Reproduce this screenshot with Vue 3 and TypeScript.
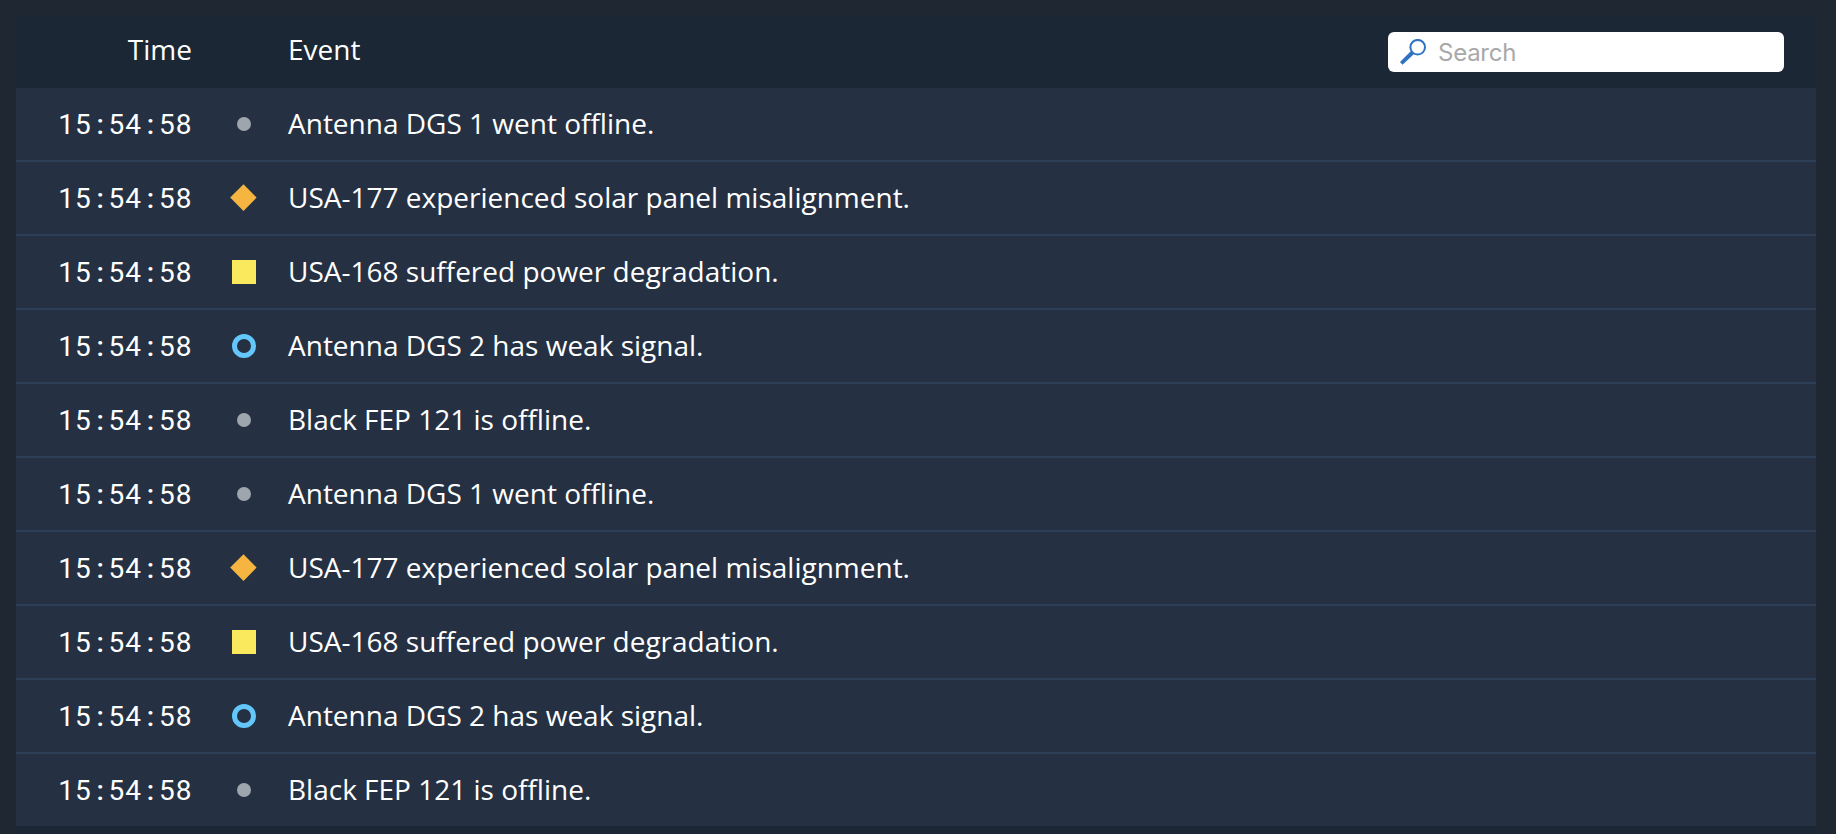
<script setup lang="ts">
import { ref, computed } from 'vue'

type Status = 'off' | 'serious' | 'caution' | 'standby'

interface LogEvent {
  time: string
  status: Status
  message: string
}

const cycle: Omit<LogEvent, 'time'>[] = [
  { status: 'off', message: 'Antenna DGS 1 went offline.' },
  { status: 'serious', message: 'USA-177 experienced solar panel misalignment.' },
  { status: 'caution', message: 'USA-168 suffered power degradation.' },
  { status: 'standby', message: 'Antenna DGS 2 has weak signal.' },
  { status: 'off', message: 'Black FEP 121 is offline.' },
]

const events: LogEvent[] = [...cycle, ...cycle].map((e) => ({ ...e, time: '15:54:58' }))

const query = ref('')
const visible = computed(() =>
  events.filter((e) => e.message.toLowerCase().includes(query.value.toLowerCase())),
)
</script>

<template>
  <main class="page">
    <section class="log">
      <header class="head">
        <span class="col-time">Time</span>
        <span class="col-status"></span>
        <span class="col-event">Event</span>
        <label class="search">
          <svg class="glass" viewBox="0 0 26 26" aria-hidden="true">
            <circle cx="17.7" cy="8.2" r="7.3" fill="none" stroke="#2f73c2" stroke-width="2" />
            <path d="M11.1 12 L14 14.9 L12.4 16.6 L2.6 25.7 L0 23.1 L9.5 13.5 Z" fill="#2f73c2" />
          </svg>
          <input v-model="query" type="text" placeholder="Search" />
        </label>
      </header>
      <ul class="rows">
        <li v-for="(e, i) in visible" :key="i" class="row">
          <time class="col-time clock"><span v-for="(c, k) in e.time" :key="k" class="cell" :class="{ colon: c === ':' }">{{ c }}</span></time>
          <span class="col-status">
            <svg class="mark" viewBox="0 0 28 28" aria-hidden="true">
              <circle v-if="e.status === 'off'" cx="14" cy="14" r="7" fill="#9ea5ad" />
              <path v-else-if="e.status === 'serious'" d="M13.5 0.3 L26.6 13.6 L13.5 27 L0.2 13.6 Z" fill="#f5b540" />
              <rect v-else-if="e.status === 'caution'" x="2" y="2" width="24" height="24" fill="#fae95d" />
              <circle v-else cx="14" cy="14" r="9.5" fill="none" stroke="#64c7fc" stroke-width="5" />
            </svg>
          </span>
          <span class="col-event">{{ e.message }}</span>
        </li>
      </ul>
    </section>
  </main>
</template>

<style>
body {
  margin: 0;
  background: #1e2732;
}
</style>

<style scoped>
.page {
  box-sizing: border-box;
  height: 834px;
  padding: 16px 20px 0 16px;
  overflow: hidden;
  background: #1e2732;
  color: #fff;
  font: 28px/38px "Open Sans", sans-serif;
}
.log {
  height: 818px;
  background: #1b2734;
}
.head {
  box-sizing: border-box;
  display: flex;
  align-items: center;
  height: 72px;
  padding: 0 32px 6px 0;
}
.col-time {
  width: 176px;
  text-align: right;
}
.col-status {
  display: flex;
  justify-content: center;
  width: 28px;
  margin: 0 30px 0 38px;
}
.col-event {
  flex: 1;
  white-space: nowrap;
}
.rows {
  margin: 0;
  padding: 0;
  list-style: none;
}
.row {
  box-sizing: border-box;
  display: flex;
  align-items: center;
  height: 74px;
  background: #253142;
  border-bottom: 2px solid #2d3e57;
}
.row .col-event {
  padding-bottom: 2px;
}
.row:last-child {
  height: 72px;
  border-bottom: 0;
}
.clock {
  display: flex;
  justify-content: flex-end;
  padding-top: 2px;
  font-family: Roboto, sans-serif;
}
.cell {
  width: 16.8px;
  text-align: center;
}
.colon {
  box-sizing: border-box;
  padding-left: 1px;
  font-weight: 500;
}
.mark {
  display: block;
  width: 28px;
  height: 28px;
}
.search {
  box-sizing: border-box;
  display: flex;
  align-items: center;
  width: 396px;
  height: 40px;
  margin-top: 6px;
  padding-left: 12px;
  border-radius: 6px;
  background: #fff;
}
.glass {
  width: 26px;
  height: 26px;
}
.search input {
  flex: 1;
  min-width: 0;
  height: 36px;
  margin: 2px 0 0 12px;
  padding: 0;
  border: 0;
  outline: 0;
  background: transparent;
  color: #283f58;
  font: 24px/36px Inter, sans-serif;
  letter-spacing: -0.25px;
}
.search input::placeholder {
  color: #a9a9a9;
  opacity: 1;
}
</style>
